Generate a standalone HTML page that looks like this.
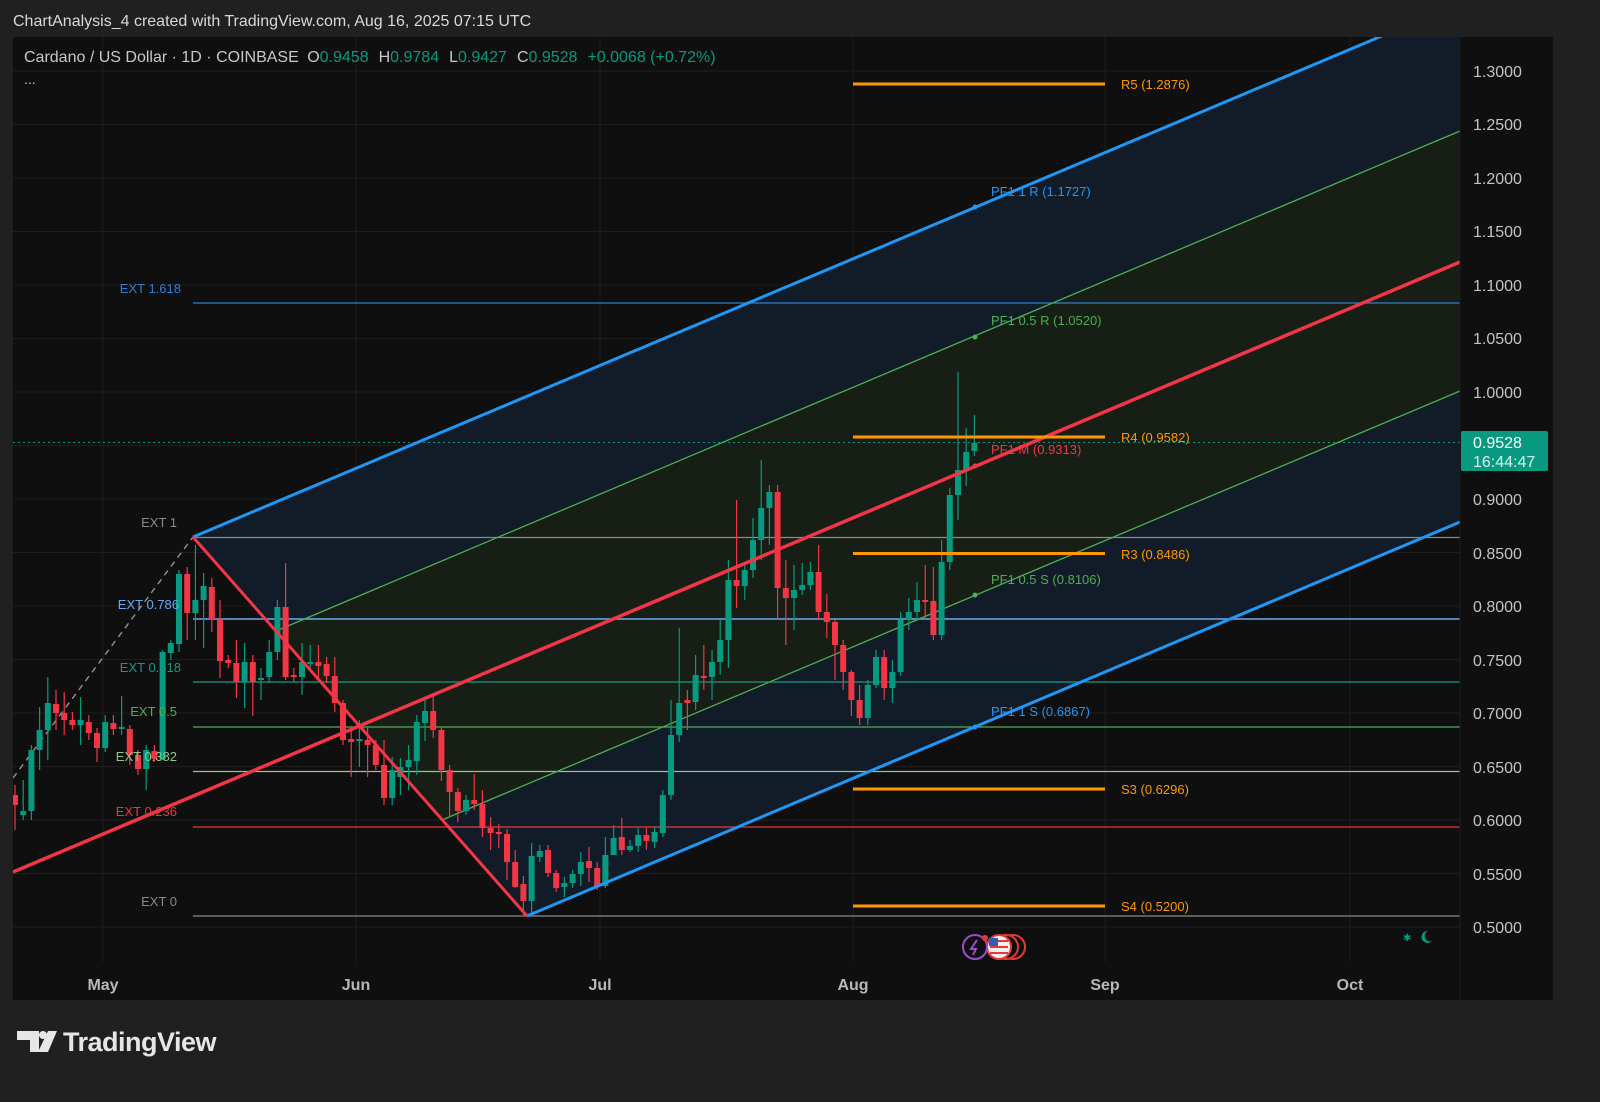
<!DOCTYPE html>
<html><head><meta charset="utf-8"><style>
html,body{margin:0;padding:0;background:#202020;width:1600px;height:1102px;overflow:hidden}
svg{display:block}
text{font-family:"Liberation Sans",sans-serif}
.gw{stroke:#089981;stroke-width:1.2;fill:none}
.rw{stroke:#f23645;stroke-width:1.2;fill:none}
.gb rect{fill:#089981}
.rb rect{fill:#f23645}
</style></head><body>
<svg width="1600" height="1102" viewBox="0 0 1600 1102" xmlns="http://www.w3.org/2000/svg">
<defs><clipPath id="c"><rect x="13" y="37" width="1447" height="925"/></clipPath></defs>
<rect width="1600" height="1102" fill="#202020"/>
<text x="13" y="26" font-size="16" fill="#d8d8d8">ChartAnalysis_4 created with TradingView.com, Aug 16, 2025 07:15 UTC</text>
<rect x="13" y="37" width="1540" height="963" fill="#0f0f0f"/>
<g stroke="#1d1d1d" stroke-width="1">
<line x1="13" y1="71" x2="1460" y2="71"/><line x1="13" y1="124.5" x2="1460" y2="124.5"/><line x1="13" y1="178" x2="1460" y2="178"/><line x1="13" y1="231.5" x2="1460" y2="231.5"/><line x1="13" y1="285" x2="1460" y2="285"/><line x1="13" y1="338.5" x2="1460" y2="338.5"/><line x1="13" y1="392" x2="1460" y2="392"/><line x1="13" y1="445.5" x2="1460" y2="445.5"/><line x1="13" y1="499" x2="1460" y2="499"/><line x1="13" y1="552.5" x2="1460" y2="552.5"/><line x1="13" y1="606" x2="1460" y2="606"/><line x1="13" y1="659.5" x2="1460" y2="659.5"/><line x1="13" y1="713" x2="1460" y2="713"/><line x1="13" y1="766.5" x2="1460" y2="766.5"/><line x1="13" y1="820" x2="1460" y2="820"/><line x1="13" y1="873.5" x2="1460" y2="873.5"/><line x1="13" y1="927" x2="1460" y2="927"/>
<line x1="103" y1="37" x2="103" y2="962"/><line x1="356" y1="37" x2="356" y2="962"/><line x1="600" y1="37" x2="600" y2="962"/><line x1="853" y1="37" x2="853" y2="962"/><line x1="1105" y1="37" x2="1105" y2="962"/><line x1="1350" y1="37" x2="1350" y2="962"/>
</g>
<g clip-path="url(#c)">
<polygon points="193,537 1460,3 1460,131 276,631" fill="#121c28"/>
<polygon points="276,631 1460,131 1460,391 442,820" fill="#171e16"/>
<polygon points="442,820 1460,391 1460,522 527,916" fill="#121c28"/>
<line x1="193" y1="303" x2="1460" y2="303" stroke="#2f7fd0" stroke-width="1.3"/>
<line x1="193" y1="537.5" x2="1460" y2="537.5" stroke="#8a8a8a" stroke-width="1.3"/>
<line x1="193" y1="619" x2="1460" y2="619" stroke="#6aaaf0" stroke-width="1.5"/>
<line x1="193" y1="682" x2="1460" y2="682" stroke="#159a87" stroke-width="1.3"/>
<line x1="193" y1="727" x2="1460" y2="727" stroke="#4caf50" stroke-width="1.3"/>
<line x1="193" y1="771.5" x2="1460" y2="771.5" stroke="#8bc98c" stroke-width="1.3"/>
<line x1="193" y1="827" x2="1460" y2="827" stroke="#e8383f" stroke-width="1.3"/>
<line x1="193" y1="916" x2="1460" y2="916" stroke="#8a8a8a" stroke-width="1.3"/>
<line x1="13" y1="442.5" x2="1460" y2="442.5" stroke="#089981" stroke-width="1" stroke-dasharray="2,3"/>
<line x1="13" y1="778" x2="193" y2="537" stroke="#9a9a9a" stroke-width="1.3" stroke-dasharray="6,5"/>
<line x1="276" y1="631" x2="1460" y2="131" stroke="#4caf50" stroke-width="1.3"/>
<line x1="442" y1="820" x2="1460" y2="391" stroke="#4caf50" stroke-width="1.3"/>

<path class="gw" d="M23.2 780V820M31.4 745V820M39.6 707V770M47.8 677V760M80.6 697V745M105.2 715V752M121.6 696V735M146.2 745V790M162.6 650V760M170.8 640V660M179 570V652M195.4 545V640M203.6 573V648M244.6 643V708M261 668V700M269.2 640V683M277.4 600V660M302 643V695M310.2 645V670M359.4 720V767M392.2 757V805M400.4 758V795M408.6 745V790M416.8 715V775M425 700V741M466 795V815M531.6 843V915M539.8 845V862M564.4 877V897M572.6 870V888M580.8 852V886M605.4 837V888M613.6 825V855M630 840V852M638.2 828V852M654.6 827V848M662.8 790V837M671 700V800M679.2 628V742M695.6 655V710M712 650V700M720.2 620V675M728.4 560V668M744.8 562V600M753 518V578M761.2 460V560M769.4 485V545M794 565V630M802.2 563V595M810.4 562V590M867.8 680V725M876 650V688M892.4 660V703M900.6 612V676M908.8 598V630M917 582V620M941.6 540V640M949.8 488V570M958 372V520M966.2 428V486M974.4 415V456"/>
<path class="rw" d="M15 785V830M56 690V730M64.2 692V735M72.4 712V730M88.8 715V740M97 728V762M113.4 715V735M129.8 725V765M138 750V775M154.4 745V762M187.2 567V640M211.8 578V632M220 600V678M228.2 655V668M236.4 640V698M252.8 655V716M285.6 563V680M293.8 668V682M318.4 645V680M326.6 657V683M334.8 657V712M343 700V745M351.2 727V777M367.6 727V777M375.8 740V770M384 740V805M433.2 693V738M441.4 727V781M449.6 765V817M457.8 788V822M474.2 774V810M482.4 790V837M490.6 817V850M498.8 824V848M507 829V880M515.2 850V888M523.4 876V915M548 845V877M556.2 870V892M589 847V882M597.2 862V890M621.8 818V855M646.4 828V850M687.4 690V730M703.8 645V690M736.6 500V608M777.6 485V620M785.8 560V645M818.6 545V620M826.8 594V638M835 620V680M843.2 640V690M851.4 670V716M859.6 685V725M884.2 650V700M925.2 565V618M933.4 567V640"/>
<g class="gb">
<rect x="20.2" y="811" width="6" height="4"/><rect x="28.4" y="750" width="6" height="61"/><rect x="36.6" y="730" width="6" height="20"/><rect x="44.8" y="703" width="6" height="27"/><rect x="77.6" y="720" width="6" height="5"/><rect x="102.2" y="722" width="6" height="26"/><rect x="118.6" y="727" width="6" height="2"/><rect x="143.2" y="750" width="6" height="19"/><rect x="159.6" y="652" width="6" height="107"/><rect x="167.8" y="643" width="6" height="10"/><rect x="176" y="574" width="6" height="70"/><rect x="192.4" y="600" width="6" height="13"/><rect x="200.6" y="586" width="6" height="14"/><rect x="241.6" y="662" width="6" height="20"/><rect x="258" y="678" width="6" height="2"/><rect x="266.2" y="652" width="6" height="25"/><rect x="274.4" y="607" width="6" height="45"/><rect x="299" y="662" width="6" height="15"/><rect x="307.2" y="662" width="6" height="2"/><rect x="356.4" y="739" width="6" height="2"/><rect x="389.2" y="770" width="6" height="28"/><rect x="397.4" y="767" width="6" height="10"/><rect x="405.6" y="760" width="6" height="7"/><rect x="413.8" y="722" width="6" height="39"/><rect x="422" y="711" width="6" height="12"/><rect x="463" y="800" width="6" height="11"/><rect x="528.6" y="856" width="6" height="45"/><rect x="536.8" y="851" width="6" height="6"/><rect x="561.4" y="883" width="6" height="4"/><rect x="569.6" y="874" width="6" height="9"/><rect x="577.8" y="862" width="6" height="12"/><rect x="602.4" y="855" width="6" height="31"/><rect x="610.6" y="838" width="6" height="17"/><rect x="627" y="846" width="6" height="4"/><rect x="635.2" y="835" width="6" height="11"/><rect x="651.6" y="832" width="6" height="10"/><rect x="659.8" y="795" width="6" height="38"/><rect x="668" y="735" width="6" height="60"/><rect x="676.2" y="703" width="6" height="32"/><rect x="692.6" y="675" width="6" height="27"/><rect x="709" y="662" width="6" height="15"/><rect x="717.2" y="640" width="6" height="22"/><rect x="725.4" y="580" width="6" height="60"/><rect x="741.8" y="570" width="6" height="16"/><rect x="750" y="540" width="6" height="30"/><rect x="758.2" y="508" width="6" height="32"/><rect x="766.4" y="492" width="6" height="16"/><rect x="791" y="590" width="6" height="8"/><rect x="799.2" y="585" width="6" height="5"/><rect x="807.4" y="572" width="6" height="13"/><rect x="864.8" y="685" width="6" height="33"/><rect x="873" y="657" width="6" height="28"/><rect x="889.4" y="672" width="6" height="16"/><rect x="897.6" y="620" width="6" height="52"/><rect x="905.8" y="612" width="6" height="8"/><rect x="914" y="600" width="6" height="12"/><rect x="938.6" y="562" width="6" height="73"/><rect x="946.8" y="495" width="6" height="67"/><rect x="955" y="470" width="6" height="25"/><rect x="963.2" y="452" width="6" height="18"/><rect x="971.4" y="443" width="6" height="8"/>
</g>
<g class="rb">
<rect x="12" y="795" width="6" height="10"/><rect x="53" y="704" width="6" height="9"/><rect x="61.2" y="713" width="6" height="7"/><rect x="69.4" y="720" width="6" height="5"/><rect x="85.8" y="722" width="6" height="11"/><rect x="94" y="733" width="6" height="15"/><rect x="110.4" y="723" width="6" height="6"/><rect x="126.8" y="729" width="6" height="26"/><rect x="135" y="755" width="6" height="14"/><rect x="151.4" y="751" width="6" height="8"/><rect x="184.2" y="574" width="6" height="39"/><rect x="208.8" y="587" width="6" height="33"/><rect x="217" y="620" width="6" height="41"/><rect x="225.2" y="660" width="6" height="3"/><rect x="233.4" y="663" width="6" height="19"/><rect x="249.8" y="662" width="6" height="20"/><rect x="282.6" y="607" width="6" height="70"/><rect x="290.8" y="675" width="6" height="2"/><rect x="315.4" y="662" width="6" height="4"/><rect x="323.6" y="664" width="6" height="12"/><rect x="331.8" y="676" width="6" height="27"/><rect x="340" y="703" width="6" height="37"/><rect x="348.2" y="739" width="6" height="3"/><rect x="364.6" y="740" width="6" height="5"/><rect x="372.8" y="745" width="6" height="20"/><rect x="381" y="765" width="6" height="33"/><rect x="430.2" y="711" width="6" height="19"/><rect x="438.4" y="730" width="6" height="40"/><rect x="446.6" y="770" width="6" height="22"/><rect x="454.8" y="792" width="6" height="19"/><rect x="471.2" y="800" width="6" height="4"/><rect x="479.4" y="804" width="6" height="24"/><rect x="487.6" y="828" width="6" height="5"/><rect x="495.8" y="832" width="6" height="2"/><rect x="504" y="834" width="6" height="28"/><rect x="512.2" y="862" width="6" height="25"/><rect x="520.4" y="884" width="6" height="17"/><rect x="545" y="850" width="6" height="23"/><rect x="553.2" y="873" width="6" height="15"/><rect x="586" y="861" width="6" height="7"/><rect x="594.2" y="868" width="6" height="18"/><rect x="618.8" y="837" width="6" height="13"/><rect x="643.4" y="835" width="6" height="6"/><rect x="684.4" y="700" width="6" height="3"/><rect x="700.8" y="676" width="6" height="2"/><rect x="733.6" y="580" width="6" height="6"/><rect x="774.6" y="492" width="6" height="96"/><rect x="782.8" y="588" width="6" height="10"/><rect x="815.6" y="572" width="6" height="40"/><rect x="823.8" y="612" width="6" height="10"/><rect x="832" y="622" width="6" height="23"/><rect x="840.2" y="645" width="6" height="27"/><rect x="848.4" y="672" width="6" height="28"/><rect x="856.6" y="700" width="6" height="18"/><rect x="881.2" y="657" width="6" height="31"/><rect x="922.2" y="600" width="6" height="2"/><rect x="930.4" y="601" width="6" height="34"/>
</g>

<line x1="193" y1="537" x2="1460" y2="3" stroke="#2196f3" stroke-width="3"/>
<line x1="527" y1="916" x2="1460" y2="522" stroke="#2196f3" stroke-width="3"/>
<line x1="13" y1="872" x2="1460" y2="262" stroke="#f23645" stroke-width="3.5"/>
<line x1="193" y1="537" x2="527" y2="916" stroke="#f23645" stroke-width="3"/>
<g stroke="#ff9800" stroke-width="3">
<line x1="853" y1="84" x2="1105" y2="84"/><line x1="853" y1="437" x2="1105" y2="437"/><line x1="853" y1="553.5" x2="1105" y2="553.5"/><line x1="853" y1="789" x2="1105" y2="789"/><line x1="853" y1="906" x2="1105" y2="906"/>
</g>
<circle cx="975" cy="207" r="2.5" fill="#2196f3"/><circle cx="975" cy="337" r="2.5" fill="#4caf50"/><circle cx="975" cy="466" r="2.5" fill="#f23645"/><circle cx="975" cy="595" r="2.5" fill="#4caf50"/><circle cx="975" cy="727" r="2.5" fill="#2196f3"/>
</g>
<g font-size="13">
<text x="1121" y="89" fill="#ff9800">R5 (1.2876)</text>
<text x="1121" y="442" fill="#ff9800">R4 (0.9582)</text>
<text x="1121" y="559" fill="#ff9800">R3 (0.8486)</text>
<text x="1121" y="794" fill="#ff9800">S3 (0.6296)</text>
<text x="1121" y="911" fill="#ff9800">S4 (0.5200)</text>
<text x="991" y="196" fill="#2196f3">PF1 1 R (1.1727)</text>
<text x="991" y="325" fill="#4caf50">PF1 0.5 R (1.0520)</text>
<text x="991" y="454" fill="#f23645">PF1 M (0.9313)</text>
<text x="991" y="584" fill="#4caf50">PF1 0.5 S (0.8106)</text>
<text x="991" y="716" fill="#2196f3">PF1 1 S (0.6867)</text>
</g>
<g font-size="13" text-anchor="end">
<text x="181" y="293" fill="#2f7fd0">EXT 1.618</text>
<text x="177" y="527" fill="#8a8a8a">EXT 1</text>
<text x="179" y="609" fill="#6aaaf0">EXT 0.786</text>
<text x="181" y="672" fill="#159a87">EXT 0.618</text>
<text x="177" y="716" fill="#4caf50">EXT 0.5</text>
<text x="177" y="761" fill="#8bc98c">EXT 0.382</text>
<text x="177" y="816" fill="#e8383f">EXT 0.236</text>
<text x="177" y="906" fill="#8a8a8a">EXT 0</text>
</g>
<text x="24" y="62" font-size="16" fill="#c8c8c8">Cardano / US Dollar · 1D · COINBASE <tspan dx="4">O</tspan><tspan fill="#089981">0.9458</tspan><tspan dx="10">H</tspan><tspan fill="#089981">0.9784</tspan><tspan dx="10">L</tspan><tspan fill="#089981">0.9427</tspan><tspan dx="10">C</tspan><tspan fill="#089981">0.9528</tspan><tspan dx="10" fill="#089981">+0.0068 (+0.72%)</tspan></text>
<text x="24" y="84" font-size="14" fill="#c8c8c8">...</text>
<line x1="1460" y1="37" x2="1460" y2="1000" stroke="#1d1d1d"/>
<g font-size="16" fill="#c4c4c4">
<text x="1473" y="77">1.3000</text><text x="1473" y="130">1.2500</text><text x="1473" y="184">1.2000</text><text x="1473" y="237">1.1500</text><text x="1473" y="291">1.1000</text><text x="1473" y="344">1.0500</text><text x="1473" y="398">1.0000</text><text x="1473" y="505">0.9000</text><text x="1473" y="559">0.8500</text><text x="1473" y="612">0.8000</text><text x="1473" y="666">0.7500</text><text x="1473" y="719">0.7000</text><text x="1473" y="773">0.6500</text><text x="1473" y="826">0.6000</text><text x="1473" y="880">0.5500</text><text x="1473" y="933">0.5000</text>
</g>
<rect x="1461" y="431" width="87" height="40" rx="2" fill="#089981"/>
<text x="1473" y="448" font-size="16" fill="#fff">0.9528</text>
<text x="1473" y="467" font-size="16" fill="#e0f2ee">16:44:47</text>
<g font-size="16" font-weight="bold" fill="#b8b8b8" text-anchor="middle">
<text x="103" y="990">May</text><text x="356" y="990">Jun</text><text x="600" y="990">Jul</text><text x="853" y="990">Aug</text><text x="1105" y="990">Sep</text><text x="1350" y="990">Oct</text>
</g>
<circle cx="1013" cy="947" r="12" fill="#0f0f0f" stroke="#e53935" stroke-width="2"/>
<circle cx="1006" cy="947" r="12" fill="#0f0f0f" stroke="#e53935" stroke-width="2"/>
<circle cx="999" cy="947" r="12" fill="#f0f0f0" stroke="#e53935" stroke-width="2"/>
<rect x="990" y="940" width="18" height="2" fill="#e53935"/><rect x="990" y="946" width="18" height="2" fill="#e53935"/><rect x="990" y="952" width="18" height="2" fill="#e53935"/>
<rect x="989" y="938" width="9" height="8" fill="#2a5fc0"/>
<circle cx="975" cy="947" r="12" fill="#0f0f0f" stroke="#9c4dcc" stroke-width="2"/>
<path d="M977 940 L971 949 L976 949 L973 955" stroke="#9c4dcc" stroke-width="2" fill="none"/>
<circle cx="985" cy="938" r="3" fill="#e53935"/>
<path d="M1428 931 a6 6 0 1 0 4 10 a5 5 0 0 1 -4 -10z" fill="#089981"/>
<text x="1403" y="941" font-size="10" fill="#089981">✱</text>
<g fill="#e6e6e6">
<path d="M17 1031 h22 v21 h-9 v-12 h-13z"/>
<circle cx="43" cy="1035" r="4"/>
<path d="M48 1031 h9 l-9 21 h-10z"/>
</g>
<text x="63" y="1051" font-size="27" font-weight="bold" fill="#e6e6e6" letter-spacing="-0.5">TradingView</text>
</svg>
</body></html>
